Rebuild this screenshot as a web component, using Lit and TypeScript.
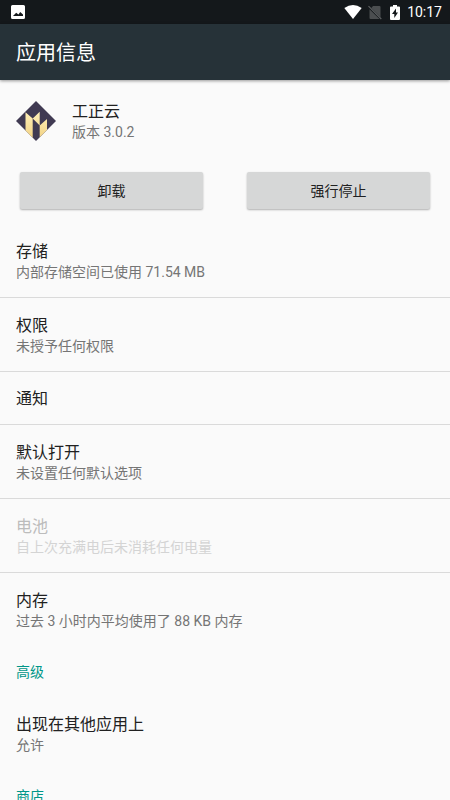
import { LitElement, html, css, nothing } from "lit";
import { customElement } from "lit/decorators.js";
import { classMap } from "lit/directives/class-map.js";

@customElement("status-bar")
class StatusBar extends LitElement {
  static styles = css`
    :host {
      display: flex;
      align-items: center;
      height: 24px;
      padding: 0 8px 0 11px;
      background: #14181b;
      color: #fff;
    }
    svg {
      display: block;
    }
    .right {
      display: flex;
      align-items: center;
      margin-left: auto;
    }
    .wifi {
      margin-right: 6px;
    }
    .sim {
      margin-right: 8px;
    }
    .battery {
      margin-right: 7px;
    }
    .clock {
      padding-top: 1px;
      font-size: 14px;
      line-height: 23px;
    }
  `;

  render() {
    return html`
      <svg width="14" height="14" viewBox="0 0 14 14" aria-hidden="true">
        <path
          fill="#fff"
          fill-rule="evenodd"
          d="M1.500 0h11A1.500 1.500 0 0 1 14 1.500v11a1.500 1.500 0 0 1-1.500 1.500h-11A1.500 1.500 0 0 1 0 12.500v-11A1.500 1.500 0 0 1 1.500 0zM2 11h10V9.500L9.200 7 7.500 9.500 5.200 7.800z"
        />
      </svg>
      <div class="right">
        <svg class="wifi" width="18" height="14" viewBox="0 0 18 14" aria-hidden="true">
          <path fill="#fff" d="M0.300 3Q9-2.800 17.700 3L9 14z" />
        </svg>
        <svg class="sim" width="14" height="15" viewBox="0 0 14 15" aria-hidden="true">
          <path fill="#4b4e50" d="M5 1h6.500a1 1 0 0 1 1 1v10.200L3.300 3zM1.500 4.200L11.500 14h-9a1 1 0 0 1-1-1z" />
          <path stroke="#5c5f61" stroke-width="1.200" d="M0.500 1.200L13.300 14" />
        </svg>
        <svg class="battery" width="10" height="15" viewBox="0 0 10 15" aria-hidden="true">
          <path
            fill="#fff"
            fill-rule="evenodd"
            d="M3 0h4v1.500h2a1 1 0 0 1 1 1V14a1 1 0 0 1-1 1H1a1 1 0 0 1-1-1V2.500a1 1 0 0 1 1-1h2zM6 3.500L2 9h2.300v4L8 7.500H6z"
          />
        </svg>
        <span class="clock">10:17</span>
      </div>
    `;
  }
}

@customElement("setting-row")
class SettingRow extends LitElement {
  static properties = {
    heading: { type: String },
    summary: { type: String },
    disabled: { type: Boolean },
    divided: { type: Boolean },
  };
  declare heading: string;
  declare summary: string;
  declare disabled: boolean;
  declare divided: boolean;

  static styles = css`
    :host {
      display: block;
    }
    .row {
      display: block;
      box-sizing: border-box;
      width: 100%;
      margin: 0;
      padding: 17px 16px;
      border: 0;
      background: none;
      font: inherit;
      text-align: left;
      color: #212121;
    }
    .divided {
      padding-bottom: 16px;
      border-bottom: 1px solid #dadada;
    }
    .single {
      padding: 16px 16px 14px;
    }
    .heading,
    .summary {
      display: block;
      white-space: nowrap;
    }
    .heading {
      font-size: 16px;
      line-height: 22px;
    }
    .summary {
      font-size: 14px;
      line-height: 18px;
      color: #757575;
    }
    .row:disabled .heading {
      color: #bcbcbc;
    }
    .row:disabled .summary {
      color: #d4d4d4;
    }
  `;

  render() {
    const classes = { row: true, divided: this.divided, single: !this.summary };
    return html`
      <button class=${classMap(classes)} type="button" ?disabled=${this.disabled}>
        <span class="heading">${this.heading}</span>
        ${this.summary ? html`<span class="summary">${this.summary}</span>` : nothing}
      </button>
    `;
  }
}

interface Setting {
  heading: string;
  summary?: string;
  disabled?: boolean;
}

const settings: Setting[] = [
  { heading: "存储", summary: "内部存储空间已使用 71.54 MB" },
  { heading: "权限", summary: "未授予任何权限" },
  { heading: "通知" },
  { heading: "默认打开", summary: "未设置任何默认选项" },
  { heading: "电池", summary: "自上次充满电后未消耗任何电量", disabled: true },
  { heading: "内存", summary: "过去 3 小时内平均使用了 88 KB 内存" },
];

@customElement("app-root")
class AppRoot extends LitElement {
  static styles = css`
    :host {
      display: flex;
      flex-direction: column;
      height: 100vh;
      overflow: hidden;
      background: #fafafa;
      color: #212121;
      font-family: Roboto, "Noto Sans CJK SC", sans-serif;
    }
    .toolbar {
      flex: none;
      display: flex;
      align-items: center;
      box-sizing: border-box;
      height: 56px;
      padding: 2px 16px 0;
      background: #263238;
      box-shadow: 0 1px 3px rgba(0, 0, 0, 0.4);
      z-index: 1;
    }
    status-bar {
      flex: none;
    }
    h1 {
      margin: 0;
      color: #fff;
      font-size: 20px;
      line-height: 28px;
      font-weight: 400;
    }
    main {
      flex: 1;
      min-height: 0;
      overflow: hidden;
    }
    .app {
      display: flex;
      align-items: center;
      gap: 16px;
      padding: 21px 16px 31px;
    }
    .logo {
      display: block;
      flex: none;
    }
    .name,
    .version {
      margin: 0;
      font-weight: 400;
    }
    .name {
      font-size: 16px;
      line-height: 22px;
    }
    .version {
      font-size: 14px;
      line-height: 18px;
      color: #757575;
    }
    .actions {
      display: grid;
      grid-template-columns: 1fr 1fr;
      gap: 44px;
      padding: 0 20px 15px;
    }
    .action {
      height: 37px;
      padding: 0 0 2px;
      border: 0;
      border-radius: 2px;
      background: #d6d7d7;
      box-shadow: 0 1px 2px rgba(0, 0, 0, 0.3);
      color: #212121;
      font-family: inherit;
      font-size: 14px;
    }
    .category {
      margin: 0;
      padding: 15px 16px;
      color: #009688;
      font-size: 14px;
      line-height: 20px;
      font-weight: 400;
    }
  `;

  render() {
    return html`
      <status-bar></status-bar>
      <header class="toolbar"><h1>应用信息</h1></header>
      <main>
        <section class="app">
          <svg class="logo" width="40" height="40" viewBox="0 0 40 40" aria-hidden="true">
            <defs>
              <linearGradient id="gold" x1="0" y1="0" x2="0" y2="1">
                <stop offset="0" stop-color="#fff0b8" />
                <stop offset="1" stop-color="#f2d386" />
              </linearGradient>
            </defs>
            <path fill="#403a52" d="M20 0l20 20-20 20L0 20z" />
            <path fill="url(#gold)" d="M9.500 11.200L16.700 17.500v19.200L9.500 29.500zM16.700 17.500L23.700 10.700v13.800zM23.700 24.500L31 18v11L23.700 36.300z" />
          </svg>
          <div>
            <h2 class="name">工正云</h2>
            <p class="version">版本 3.0.2</p>
          </div>
        </section>
        <div class="actions">
          <button class="action" type="button">卸载</button>
          <button class="action" type="button">强行停止</button>
        </div>
        ${settings.map(
          (s, i) => html`
            <setting-row
              .heading=${s.heading}
              .summary=${s.summary ?? ""}
              .disabled=${!!s.disabled}
              .divided=${i < settings.length - 1}
            ></setting-row>
          `,
        )}
        <h3 class="category">高级</h3>
        <setting-row .heading=${"出现在其他应用上"} .summary=${"允许"}></setting-row>
        <h3 class="category">商店</h3>
      </main>
    `;
  }
}
